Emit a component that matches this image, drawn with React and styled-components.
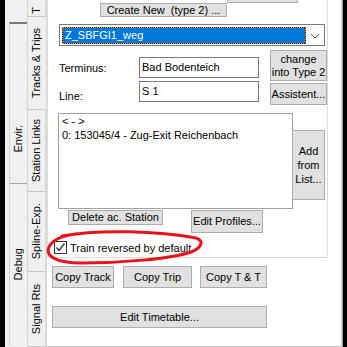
import styled, { createGlobalStyle } from 'styled-components';

const GlobalStyle = createGlobalStyle`
  html, body {
    margin: 0;
    padding: 0;
    background: #000;
  }
  body {
    font-family: "Liberation Sans", Arial, sans-serif;
    font-size: 11px;
    color: #000;
  }
  #root {
    width: 347px;
    height: 347px;
    overflow: hidden;
  }
`;

const App = () => {
  return (
    <>
      <GlobalStyle />
      <Frame>
        <BlackEdge />
        <OuterTabs>
          <OuterTab h={161} pb={30} selected>
            <TabLabel>Envir.</TabLabel>
          </OuterTab>
          <OuterTab h={162}>
            <TabLabel>Debug</TabLabel>
          </OuterTab>
        </OuterTabs>
        <InnerTabs>
          <InnerTab h={17} clip>
            <TabLabel>T</TabLabel>
          </InnerTab>
          <InnerTab h={93} selected>
            <TabLabel>Tracks &amp; Trips</TabLabel>
          </InnerTab>
          <InnerTab h={82}>
            <TabLabel>Station Links</TabLabel>
          </InnerTab>
          <InnerTab h={80}>
            <TabLabel>Spline-Exp.</TabLabel>
          </InnerTab>
          <InnerTab h={75}>
            <TabLabel>Signal Rts</TabLabel>
          </InnerTab>
        </InnerTabs>
        <Panel>
          <GroupBox>
            <HeaderRow>
              <Button w={127} h={14}>
                Create New&nbsp; (type 2) ...
              </Button>
              <GhostButton />
            </HeaderRow>
            <Combo>
              <ComboValue>Z_SBFGI1_weg</ComboValue>
              <ComboArrow>
                <svg width="10" height="6" viewBox="0 0 10 6">
                  <path d="M1 1 L5 5 L9 1" fill="none" stroke="#555" strokeWidth="1" />
                </svg>
              </ComboArrow>
            </Combo>
            <FieldsRow>
              <Fields>
                <FieldRow>
                  <Label>Terminus:</Label>
                  <TextBox>Bad Bodenteich</TextBox>
                </FieldRow>
                <FieldRow>
                  <Label low>Line:</Label>
                  <TextBox>S 1</TextBox>
                </FieldRow>
              </Fields>
              <SideButtons>
                <Button w={57} h={31}>
                  change
                  <br />
                  into Type 2
                </Button>
                <Button w={57} h={22}>
                  Assistent...
                </Button>
              </SideButtons>
            </FieldsRow>
            <ListRow>
              <ListBox>
                <ListItem>&lt; - &gt;</ListItem>
                <ListItem>0: 153045/4 - Zug-Exit Reichenbach</ListItem>
              </ListBox>
              <AddButton>
                Add
                <br />
                from
                <br />
                List...
              </AddButton>
            </ListRow>
            <ListButtons>
              <Button w={95} h={15} ml={20}>
                Delete ac. Station
              </Button>
              <Button w={72} h={23} ml={28}>
                Edit Profiles...
              </Button>
            </ListButtons>
            <CheckRow>
              <CheckBox>
                <svg width="11" height="11" viewBox="0 0 11 11">
                  <path d="M1.5 5.5 L4 8.5 L9.5 1.5" fill="none" stroke="#333" strokeWidth="1.3" />
                </svg>
              </CheckBox>
              <CheckText>Train reversed by default</CheckText>
              <Scribble width="164" height="40" viewBox="0 0 164 40">
                <path
                  d="M18 8 C 55 1, 115 3, 152 10 C 161 13, 157 20, 147 24 C 127 31, 77 35, 37 35 C 12 35, 1 28, 5 19 C 8 12, 17 8, 32 6"
                  fill="none"
                  stroke="#e5141b"
                  strokeWidth="3"
                  strokeLinecap="round"
                />
              </Scribble>
            </CheckRow>
          </GroupBox>
          <CopyRow>
            <Button w={62} h={22}>
              Copy Track
            </Button>
            <Button w={69} h={22} ml={9}>
              Copy Trip
            </Button>
            <Button w={67} h={22} ml={8}>
              Copy T &amp; T
            </Button>
          </CopyRow>
          <TimetableRow>
            <Button w={215} h={22}>
              Edit Timetable...
            </Button>
          </TimetableRow>
        </Panel>
        <RightEdge />
      </Frame>
    </>
  );
};

export default App;

const Frame = styled.div`
  display: flex;
  width: 347px;
  height: 347px;
  background: #000;
`;

const BlackEdge = styled.div`
  width: 5px;
  flex-shrink: 0;
  background: #000;
`;

const OuterTabs = styled.div`
  width: 22px;
  flex-shrink: 0;
  box-sizing: border-box;
  padding: 22px 0 0 4px;
  background: #f0f0f0;
  display: flex;
  flex-direction: column;
`;

const OuterTab = styled.div`
  height: ${(p) => p.h}px;
  box-sizing: border-box;
  border-left: 1px solid #d4d4d4;
  border-top: ${(p) => (p.selected ? '2px solid #7a7a7a' : '1px solid #a8a8a8')};
  display: flex;
  align-items: ${(p) => (p.pb ? 'flex-end' : 'center')};
  justify-content: center;
  padding-bottom: ${(p) => p.pb || 0}px;
  padding-right: 1px;
`;

const InnerTabs = styled.div`
  width: 19px;
  flex-shrink: 0;
  box-sizing: border-box;
  border-left: 1px solid #d4d4d4;
  background: #f0f0f0;
  display: flex;
  flex-direction: column;
`;

const InnerTab = styled.div`
  height: ${(p) => p.h}px;
  flex-shrink: 0;
  box-sizing: border-box;
  border-bottom: 1px solid #c8c8c8;
  border-right: 1px solid ${(p) => (p.selected ? '#f0f0f0' : '#d9d9d9')};
  display: flex;
  align-items: ${(p) => (p.clip ? 'flex-end' : 'center')};
  justify-content: center;
  overflow: hidden;
  padding-bottom: ${(p) => (p.clip ? 2 : 0)}px;
`;

const TabLabel = styled.span`
  writing-mode: vertical-rl;
  transform: rotate(180deg);
  white-space: nowrap;
  line-height: 13px;
  font-size: 11px;
`;

const Panel = styled.div`
  width: 296px;
  flex-shrink: 0;
  box-sizing: border-box;
  height: 347px;
  background: #fff;
  border-left: 1px solid #dadada;
  border-right: 1px solid #d8d8d8;
  border-bottom: 1px solid #c8c8c8;
  display: flex;
  flex-direction: column;
`;

const RightEdge = styled.div`
  flex: 1;
  border-left: 1px solid #9a9a9a;
  background: #000;
`;

const GroupBox = styled.div`
  position: relative;
  width: 281px;
  height: 258px;
  box-sizing: border-box;
  border: 1px solid #dcdcdc;
  border-top: none;
  display: flex;
  flex-direction: column;
`;

const Button = styled.div`
  width: ${(p) => p.w}px;
  height: ${(p) => p.h}px;
  margin-left: ${(p) => p.ml || 0}px;
  flex-shrink: 0;
  box-sizing: border-box;
  background: #e1e1e1;
  border: 1px solid #adadad;
  display: flex;
  align-items: center;
  justify-content: center;
  text-align: center;
  line-height: 13px;
  white-space: nowrap;
`;

const HeaderRow = styled.div`
  height: 17px;
  display: flex;
  padding-left: 52px;
  align-items: flex-end;
`;

const GhostButton = styled.div`
  width: 71px;
  height: 3px;
  align-self: flex-start;
  box-sizing: border-box;
  background: #e1e1e1;
  border: 1px solid #adadad;
  border-top: none;
`;

const Combo = styled.div`
  margin: 7px 0 0 11px;
  width: 266px;
  height: 22px;
  box-sizing: border-box;
  border: 1px solid #7a7a7a;
  background: #fff;
  display: flex;
  align-items: center;
  padding-left: 2px;
`;

const ComboValue = styled.div`
  width: 244px;
  height: 17px;
  box-sizing: border-box;
  background: #0078d7;
  border: 1px solid #1a1a1a;
  outline: 1px dotted #ff9a1a;
  outline-offset: -1px;
  color: #fff;
  line-height: 15px;
  padding-left: 2px;
`;

const ComboArrow = styled.div`
  flex: 1;
  display: flex;
  justify-content: center;
  align-items: center;
  padding-top: 1px;
`;

const FieldsRow = styled.div`
  display: flex;
  margin-top: 4px;
`;

const Fields = styled.div`
  display: flex;
  flex-direction: column;
  gap: 3px;
  padding: 7px 0 0 11px;
  width: 211px;
`;

const FieldRow = styled.div`
  display: flex;
  align-items: center;
  height: 21px;
`;

const Label = styled.div`
  width: 80px;
  padding-top: ${(p) => (p.low ? 8 : 1)}px;
`;

const TextBox = styled.div`
  width: 120px;
  height: 21px;
  box-sizing: border-box;
  border: 1px solid #7a7a7a;
  padding-left: 2px;
  line-height: 19px;
  background: #fff;
`;

const SideButtons = styled.div`
  display: flex;
  flex-direction: column;
  gap: 2px;
`;

const ListRow = styled.div`
  display: flex;
  margin: 8px 0 0 10px;
`;

const ListBox = styled.div`
  width: 235px;
  height: 96px;
  box-sizing: border-box;
  border: 1px solid #a0a0a0;
  padding: 0 0 0 3px;
`;

const ListItem = styled.div`
  height: 14px;
  line-height: 14px;
  white-space: nowrap;
`;

const AddButton = styled(Button).attrs({ w: 33, h: 70 })`
  margin-left: -1px;
  margin-top: 17px;
  line-height: 14px;
`;

const ListButtons = styled.div`
  display: flex;
  align-items: flex-start;
  margin-top: 1px;
`;

const CheckRow = styled.div`
  position: relative;
  display: flex;
  align-items: center;
  margin: 8px 0 0 6px;
  height: 13px;
`;

const CheckBox = styled.div`
  width: 13px;
  height: 13px;
  box-sizing: border-box;
  border: 1px solid #333;
  background: #fff;
  display: flex;
  align-items: center;
  justify-content: center;
`;

const CheckText = styled.span`
  margin-left: 3px;
  white-space: nowrap;
`;

const Scribble = styled.svg`
  position: absolute;
  left: -10px;
  top: -13px;
  pointer-events: none;
`;

const CopyRow = styled.div`
  display: flex;
  margin: 8px 0 0 5px;
`;

const TimetableRow = styled.div`
  display: flex;
  margin: 18px 0 0 5px;
`;
